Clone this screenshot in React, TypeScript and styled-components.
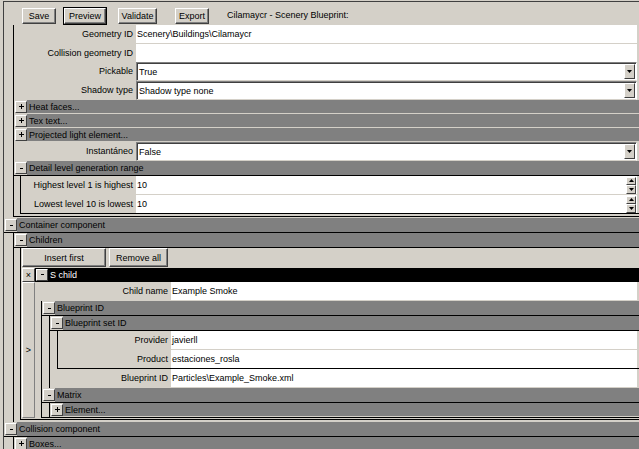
import React from "react";
import styled, { createGlobalStyle } from "styled-components";

const GlobalStyle = createGlobalStyle`
  html, body {
    margin: 0;
    padding: 0;
    width: 639px;
    height: 449px;
    overflow: hidden;
    background: #d4d0c8;
  }
  body {
    font-family: "Liberation Sans", Arial, sans-serif;
    font-size: 9px;
    color: #000;
  }
  * { box-sizing: border-box; }
`;

const Window = styled.div`
  margin: 1px 0 0 3px;
  border-top: 1px solid #404040;
  border-left: 1px solid #404040;
  height: 448px;
  overflow: hidden;
`;

const Toolbar = styled.div`
  height: 23px;
  display: flex;
  align-items: flex-start;
  padding: 6px 0 0 18px;
`;

const ToolButton = styled.button<{ $w: number; $ml: number; $default?: boolean }>`
  flex: none;
  width: ${(p) => p.$w}px;
  height: 16px;
  margin: 0 0 0 ${(p) => p.$ml}px;
  padding: 0;
  background: #d4d0c8;
  font: inherit;
  color: #000;
  border: 1px solid;
  border-color: #fff #404040 #404040 #fff;
  box-shadow: inset -1px -1px #808080;
  outline: ${(p) => (p.$default ? "1px solid #000" : "none")};
`;

const WindowTitle = styled.div<{ $ml: number }>`
  margin-left: ${(p) => p.$ml}px;
  line-height: 12px;
  padding-top: 1px;
  white-space: nowrap;
`;

const Section = styled.div<{ $ml: number; $pb?: number; $noBottom?: boolean }>`
  margin-left: ${(p) => p.$ml}px;
  border-left: 1px solid #000;
  border-bottom: ${(p) => (p.$noBottom ? "none" : "1px solid #000")};
  padding-bottom: ${(p) => p.$pb ?? 0}px;
`;

const Gap = styled.div<{ $h: number }>`
  height: ${(p) => p.$h}px;
`;

const HeaderRow = styled.div<{ $open: boolean; $dark?: boolean }>`
  display: flex;
  align-items: center;
  height: ${(p) => (p.$open && !p.$dark ? 15 : 14)}px;
  border-bottom: 1px solid ${(p) => (p.$open ? "#000" : "#d4d0c8")};
  background: ${(p) => (p.$dark ? "#000" : "transparent")};
`;

const Toggle = styled.span<{ $ml: number }>`
  flex: none;
  width: 12px;
  height: 12px;
  margin-left: ${(p) => p.$ml}px;
  background: #d4d0c8;
  border: 1px solid;
  border-color: #fff #404040 #404040 #fff;
  display: flex;
  align-items: center;
  justify-content: center;
`;

const HeaderTitle = styled.div<{ $dark?: boolean }>`
  flex: 1;
  align-self: stretch;
  display: flex;
  align-items: center;
  padding-left: 2px;
  white-space: nowrap;
  background: ${(p) => (p.$dark ? "#000" : "#808080")};
  color: ${(p) => (p.$dark ? "#fff" : "#000")};
`;

const Row = styled.div<{ $lw: number; $last?: boolean }>`
  display: grid;
  grid-template-columns: ${(p) => p.$lw}px 1fr;
  height: ${(p) => (p.$last ? 18 : 19)}px;
`;

const Label = styled.div`
  text-align: right;
  padding-right: 3px;
  line-height: 18px;
  white-space: nowrap;
  overflow: hidden;
`;

const Value = styled.div<{ $last?: boolean }>`
  background: #fff;
  margin-right: 2px;
  padding-left: 1px;
  line-height: 18px;
  white-space: nowrap;
  border-bottom: ${(p) => (p.$last ? "none" : "1px solid #d4d0c8")};
  display: flex;
  align-items: center;
  justify-content: space-between;
`;

const Select = styled.div`
  background: #fff;
  margin-right: 2px;
  padding-left: 2px;
  display: flex;
  align-items: center;
  justify-content: space-between;
  border: 1px solid;
  border-color: #808080 #fff #d4d0c8 #808080;
  box-shadow: inset 1px 1px #404040;
`;

const ArrowButton = styled.span`
  flex: none;
  width: 11px;
  height: 15px;
  margin-right: 1px;
  background: #d4d0c8;
  border: 1px solid;
  border-color: #fff #404040 #404040 #fff;
  display: flex;
  align-items: center;
  justify-content: center;
`;

const Spinner = styled.span`
  flex: none;
  display: flex;
  flex-direction: column;
  margin-right: 1px;
  height: 17px;
`;

const SpinButton = styled.span`
  width: 10px;
  height: 8.5px;
  background: #d4d0c8;
  border: 1px solid;
  border-color: #fff #404040 #404040 #fff;
  display: flex;
  align-items: center;
  justify-content: center;
`;

const ButtonRow = styled.div`
  display: flex;
  height: 20px;
  padding: 0 0 1px 1px;
  gap: 3px;
`;

const RowButton = styled.button<{ $w: number }>`
  width: ${(p) => p.$w}px;
  height: 19px;
  margin: 0;
  padding: 0;
  background: #d4d0c8;
  font: inherit;
  color: #000;
  border: 1px solid;
  border-color: #fff #404040 #404040 #fff;
  box-shadow: inset -1px -1px #808080;
`;

const ChildItem = styled.div`
  display: flex;
  margin-left: 1px;
`;

const XColumn = styled.div`
  flex: none;
  width: 13px;
  display: flex;
  flex-direction: column;
`;

const XButton = styled.span`
  height: 14px;
  background: #d4d0c8;
  border: 1px solid;
  border-color: #fff #404040 #404040 #fff;
  display: flex;
  align-items: center;
  justify-content: center;
  font-size: 9px;
`;

const XBar = styled.span`
  flex: 1;
  background: #d4d0c8;
  border: 1px solid;
  border-color: #fff #808080 #808080 #fff;
  display: flex;
  align-items: center;
  justify-content: center;
  font-size: 9px;
`;

const ChildMain = styled.div`
  flex: 1;
  min-width: 0;
`;

const Glyph = ({ open }: { open: boolean }) => (
  <svg width="7" height="7" viewBox="0 0 7 7">
    <path
      d={open ? "M2 3.5h3" : "M1 3.5h5M3.5 1v5"}
      stroke="#000"
      strokeWidth="1"
      shapeRendering="crispEdges"
    />
  </svg>
);

const Tri = ({ up }: { up?: boolean }) => (
  <svg width="5" height="3" viewBox="0 0 5 3">
    <path d={up ? "M2.5 0L5 3H0z" : "M0 0h5L2.5 3z"} fill="#000" />
  </svg>
);

type HeaderProps = { title: string; open: boolean; ml: number; dark?: boolean };
const Header = ({ title, open, ml, dark }: HeaderProps) => (
  <HeaderRow $open={open} $dark={dark}>
    <Toggle $ml={ml}>
      <Glyph open={open} />
    </Toggle>
    <HeaderTitle $dark={dark}>{title}</HeaderTitle>
  </HeaderRow>
);

type FieldProps = { label: string; value?: string; lw: number; last?: boolean };
const TextField = ({ label, value, lw, last }: FieldProps) => (
  <Row $lw={lw} $last={last}>
    <Label>{label}</Label>
    <Value $last={last}>{value}</Value>
  </Row>
);

const SelectField = ({ label, value, lw }: FieldProps) => (
  <Row $lw={lw}>
    <Label>{label}</Label>
    <Select>
      <span>{value}</span>
      <ArrowButton>
        <Tri />
      </ArrowButton>
    </Select>
  </Row>
);

const SpinField = ({ label, value, lw, last }: FieldProps) => (
  <Row $lw={lw} $last={last}>
    <Label>{label}</Label>
    <Value $last={last}>
      <span>{value}</span>
      <Spinner>
        <SpinButton>
          <Tri up />
        </SpinButton>
        <SpinButton>
          <Tri />
        </SpinButton>
      </Spinner>
    </Value>
  </Row>
);

export default function App() {
  return (
    <>
      <GlobalStyle />
      <Window>
        <Toolbar>
          <ToolButton $w={34} $ml={0}>Save</ToolButton>
          <ToolButton $w={42} $ml={8} $default>Preview</ToolButton>
          <ToolButton $w={39} $ml={12}>Validate</ToolButton>
          <ToolButton $w={34} $ml={18}>Export</ToolButton>
          <WindowTitle $ml={18}>Cilamaycr - Scenery Blueprint:</WindowTitle>
        </Toolbar>

        <Section $ml={9} $pb={2}>
          <TextField label="Geometry ID" value="Scenery\Buildings\Cilamaycr" lw={122} />
          <TextField label="Collision geometry ID" value="" lw={122} last />
          <SelectField label="Pickable" value="True" lw={122} />
          <SelectField label="Shadow type" value="Shadow type none" lw={122} />
          <Header title="Heat faces..." open={false} ml={1} />
          <Header title="Tex text..." open={false} ml={1} />
          <Header title="Projected light element..." open={false} ml={1} />
          <SelectField label="Instantáneo" value="False" lw={122} />
          <Header title="Detail level generation range" open ml={1} />
          <Section $ml={6}>
            <SpinField label="Highest level 1 is highest" value="10" lw={115} />
            <SpinField label="Lowest level 10 is lowest" value="10" lw={115} last />
          </Section>
        </Section>

        <Gap $h={1} />
        <Header title="Container component" open ml={1} />
        <Section $ml={9} $pb={2} $noBottom>
          <Header title="Children" open ml={1} />
          <Section $ml={6} $pb={1}>
            <ButtonRow>
              <RowButton $w={84}>Insert first</RowButton>
              <RowButton $w={59}>Remove all</RowButton>
            </ButtonRow>
            <ChildItem>
              <XColumn>
                <XButton>×</XButton>
                <XBar>&gt;</XBar>
              </XColumn>
              <ChildMain>
                <Header title="S child" open ml={1} dark />
                <TextField label="Child name" value="Example Smoke" lw={136} />
                <Section $ml={6}>
                  <Header title="Blueprint ID" open ml={1} />
                  <Section $ml={7} $noBottom>
                    <Header title="Blueprint set ID" open ml={1} />
                    <Section $ml={7}>
                      <TextField label="Provider" value="javierll" lw={113} />
                      <TextField label="Product" value="estaciones_rosla" lw={113} last />
                    </Section>
                    <TextField label="Blueprint ID" value="Particles\Example_Smoke.xml" lw={121} />
                  </Section>
                  <Header title="Matrix" open ml={1} />
                  <Section $ml={7} $noBottom>
                    <Header title="Element..." open={false} ml={1} />
                  </Section>
                </Section>
              </ChildMain>
            </ChildItem>
          </Section>
        </Section>

        <Header title="Collision component" open ml={1} />
        <Section $ml={9} $noBottom>
          <Header title="Boxes..." open={false} ml={1} />
        </Section>
      </Window>
    </>
  );
}
